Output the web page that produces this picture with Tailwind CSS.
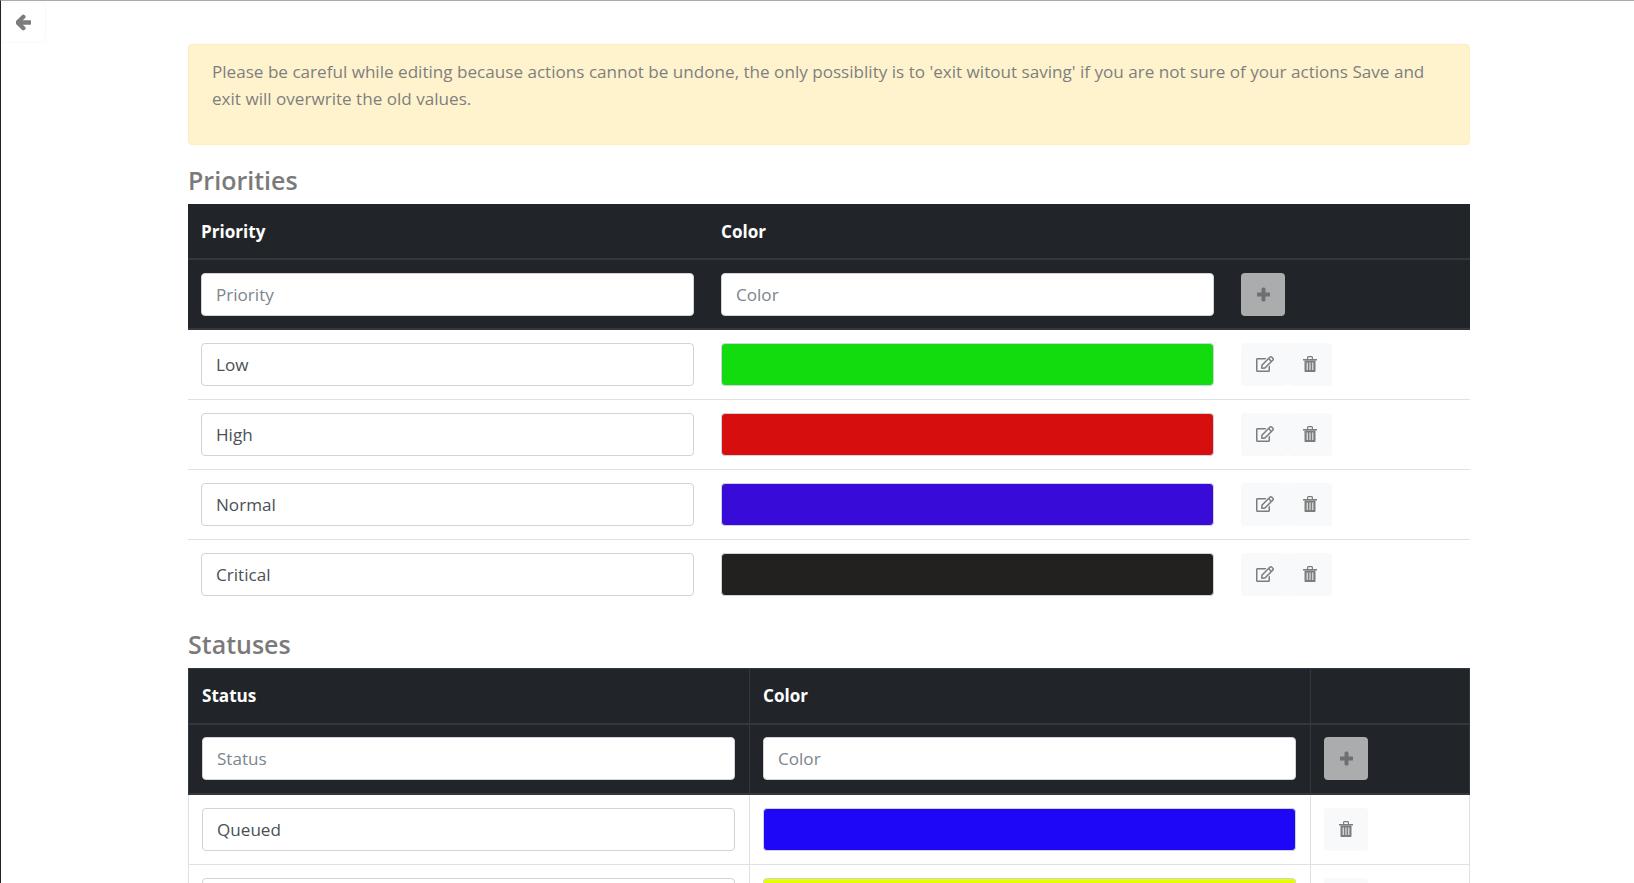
<!DOCTYPE html>
<html lang="en">
<head>
<meta charset="utf-8">
<script src="https://cdn.jsdelivr.net/npm/@tailwindcss/browser@4"></script>
<title>Priorities and statuses</title>
</head>
<body class="h-[883px] overflow-hidden bg-white font-['Open_Sans',sans-serif] text-[17.1px] text-[#7a7a7a]">
<div class="relative h-[883px] overflow-hidden border-t border-l border-t-[#aaaaaa] border-l-[#222222]">
  <button class="absolute left-0 top-[1px] flex h-[41px] w-[45px] items-center justify-center rounded-[4px] border border-[#f8f9fa] bg-white">
    <svg viewBox="0 0 448 512" class="h-[17px] w-[15px] fill-[#7d7d7d] stroke-[#7d7d7d] stroke-[50]"><path d="M257.5 445.1l-22.2 22.2c-9.4 9.4-24.6 9.4-33.9 0L7 273c-9.4-9.4-9.4-24.6 0-33.9L201.4 44.7c9.4-9.4 24.6-9.4 33.9 0l22.2 22.2c9.5 9.5 9.3 25-.4 34.3L136.6 216H424c13.3 0 24 10.7 24 24v32c0 13.3-10.7 24-24 24H136.6l120.5 114.8c9.8 9.3 10 24.8.4 34.3z"/></svg>
  </button>

  <main class="ml-[187px] w-[1282px] pt-[43px]">
    <div class="h-[101px] rounded-[4px] border border-[#ffeeba] bg-[#fff3cd] px-[23px] pt-[13px] leading-[27px] text-[#7f7f7f]">
      Please be careful while editing because actions cannot be undone, the only possiblity is to 'exit witout saving' if you are not sure of your actions Save and<br>exit will overwrite the old values.
    </div>

    <h2 class="mt-[19px] h-[40px] text-[25px] font-semibold leading-[32px] text-[#7a7a7a]">Priorities</h2>

    <table class="w-[1282px] table-fixed border-collapse">
      <colgroup><col class="w-[520px]"><col class="w-[520px]"><col></colgroup>
      <thead class="bg-[#212529] text-white">
        <tr class="h-[55px] border-b-2 border-[#32383e]">
          <th class="px-[13px] pt-[2px] text-left font-bold">Priority</th>
          <th class="px-[13px] pt-[2px] text-left font-bold">Color</th>
          <th></th>
        </tr>
        <tr class="h-[70px] border-b-2 border-[#32383e]">
          <td class="px-[13px] font-normal"><input placeholder="Priority" class="h-[43px] w-[493px] rounded-[4px] border border-[#ced4da] bg-white px-[14px] text-[#495057] placeholder:text-[#7d858c]"></td>
          <td class="px-[13px] font-normal"><input placeholder="Color" class="h-[43px] w-[493px] rounded-[4px] border border-[#ced4da] bg-white px-[14px] text-[#495057] placeholder:text-[#7d858c]"></td>
          <td class="px-[13px]">
            <button class="flex h-[43px] w-[44px] items-center justify-center rounded-[4px] bg-[#abacad]"><svg viewBox="0 0 448 512" class="h-[15px] w-[13px] fill-[#6c7072] stroke-[#6c7072] stroke-[40]"><path d="M416 208H272V64c0-17.67-14.33-32-32-32h-32c-17.67 0-32 14.33-32 32v144H32c-17.67 0-32 14.33-32 32v32c0 17.67 14.33 32 32 32h144v144c0 17.67 14.33 32 32 32h32c17.67 0 32-14.33 32-32V304h144c17.67 0 32-14.33 32-32v-32c0-17.67-14.33-32-32-32z"/></svg></button>
          </td>
        </tr>
      </thead>
      <tbody>
        <tr class="h-[70px] border-b border-[#dee2e6]">
          <td class="px-[13px]"><input value="Low" class="h-[43px] w-[493px] rounded-[4px] border border-[#ced4da] bg-white px-[14px] text-[#495057]"></td>
          <td class="px-[13px]"><div class="h-[43px] w-[493px] rounded-[4px] border border-[#ced4da] bg-[#12dc0e]"></div></td>
          <td class="px-[13px]"><div class="flex">
            <button class="flex h-[43px] w-[47px] items-center justify-center rounded-[4px] bg-[#f8f9fa]"><svg viewBox="0 0 576 512" class="h-[16px] w-[18px] fill-[#7d7d7d]"><path d="M402.3 344.9l32-32c5-5 13.7-1.5 13.7 5.7V464c0 26.5-21.5 48-48 48H48c-26.5 0-48-21.5-48-48V112c0-26.5 21.5-48 48-48h273.5c7.1 0 10.7 8.6 5.7 13.7l-32 32c-1.5 1.5-3.5 2.3-5.7 2.3H48v352h352V350.5c0-2.1.8-4.1 2.3-5.6zm156.6-201.8L296.3 405.7l-90.4 10c-26.2 2.9-48.5-19.2-45.6-45.6l10-90.4L432.9 17.1c22.9-22.9 59.9-22.9 82.7 0l43.2 43.2c22.9 22.9 22.9 60 .1 82.8zM460.1 174L402 115.9 216.2 301.8l-7.3 65.3 65.3-7.3L460.1 174zm64.8-79.7l-43.2-43.2c-4.1-4.1-10.8-4.1-14.8 0L436 82l58.1 58.1 30.9-30.9c4-4.2 4-10.8-.1-14.9z"/></svg></button>
            <button class="flex h-[43px] w-[44px] items-center justify-center rounded-[4px] bg-[#f8f9fa]"><svg viewBox="0 0 14 16" class="h-[16px] w-[14px] fill-[#7d7d7d]"><path d="M0 3h14v1.5H0zM4 3V1.5C4 .7 4.7 0 5.5 0h3c.8 0 1.5.7 1.5 1.5V3H8.8V1.2H5.2V3z"/><path fill-rule="evenodd" d="M1.5 4.5h11V15c0 .6-.4 1-1 1h-9c-.6 0-1-.4-1-1zM3.7 6.5v7.5h1V6.5zM6.5 6.5v7.5h1V6.5zM9.3 6.5v7.5h1V6.5z"/></svg></button>
          </div></td>
        </tr>
        <tr class="h-[70px] border-b border-[#dee2e6]">
          <td class="px-[13px]"><input value="High" class="h-[43px] w-[493px] rounded-[4px] border border-[#ced4da] bg-white px-[14px] text-[#495057]"></td>
          <td class="px-[13px]"><div class="h-[43px] w-[493px] rounded-[4px] border border-[#ced4da] bg-[#d70e0e]"></div></td>
          <td class="px-[13px]"><div class="flex">
            <button class="flex h-[43px] w-[47px] items-center justify-center rounded-[4px] bg-[#f8f9fa]"><svg viewBox="0 0 576 512" class="h-[16px] w-[18px] fill-[#7d7d7d]"><path d="M402.3 344.9l32-32c5-5 13.7-1.5 13.7 5.7V464c0 26.5-21.5 48-48 48H48c-26.5 0-48-21.5-48-48V112c0-26.5 21.5-48 48-48h273.5c7.1 0 10.7 8.6 5.7 13.7l-32 32c-1.5 1.5-3.5 2.3-5.7 2.3H48v352h352V350.5c0-2.1.8-4.1 2.3-5.6zm156.6-201.8L296.3 405.7l-90.4 10c-26.2 2.9-48.5-19.2-45.6-45.6l10-90.4L432.9 17.1c22.9-22.9 59.9-22.9 82.7 0l43.2 43.2c22.9 22.9 22.9 60 .1 82.8zM460.1 174L402 115.9 216.2 301.8l-7.3 65.3 65.3-7.3L460.1 174zm64.8-79.7l-43.2-43.2c-4.1-4.1-10.8-4.1-14.8 0L436 82l58.1 58.1 30.9-30.9c4-4.2 4-10.8-.1-14.9z"/></svg></button>
            <button class="flex h-[43px] w-[44px] items-center justify-center rounded-[4px] bg-[#f8f9fa]"><svg viewBox="0 0 14 16" class="h-[16px] w-[14px] fill-[#7d7d7d]"><path d="M0 3h14v1.5H0zM4 3V1.5C4 .7 4.7 0 5.5 0h3c.8 0 1.5.7 1.5 1.5V3H8.8V1.2H5.2V3z"/><path fill-rule="evenodd" d="M1.5 4.5h11V15c0 .6-.4 1-1 1h-9c-.6 0-1-.4-1-1zM3.7 6.5v7.5h1V6.5zM6.5 6.5v7.5h1V6.5zM9.3 6.5v7.5h1V6.5z"/></svg></button>
          </div></td>
        </tr>
        <tr class="h-[70px] border-b border-[#dee2e6]">
          <td class="px-[13px]"><input value="Normal" class="h-[43px] w-[493px] rounded-[4px] border border-[#ced4da] bg-white px-[14px] text-[#495057]"></td>
          <td class="px-[13px]"><div class="h-[43px] w-[493px] rounded-[4px] border border-[#ced4da] bg-[#380bd8]"></div></td>
          <td class="px-[13px]"><div class="flex">
            <button class="flex h-[43px] w-[47px] items-center justify-center rounded-[4px] bg-[#f8f9fa]"><svg viewBox="0 0 576 512" class="h-[16px] w-[18px] fill-[#7d7d7d]"><path d="M402.3 344.9l32-32c5-5 13.7-1.5 13.7 5.7V464c0 26.5-21.5 48-48 48H48c-26.5 0-48-21.5-48-48V112c0-26.5 21.5-48 48-48h273.5c7.1 0 10.7 8.6 5.7 13.7l-32 32c-1.5 1.5-3.5 2.3-5.7 2.3H48v352h352V350.5c0-2.1.8-4.1 2.3-5.6zm156.6-201.8L296.3 405.7l-90.4 10c-26.2 2.9-48.5-19.2-45.6-45.6l10-90.4L432.9 17.1c22.9-22.9 59.9-22.9 82.7 0l43.2 43.2c22.9 22.9 22.9 60 .1 82.8zM460.1 174L402 115.9 216.2 301.8l-7.3 65.3 65.3-7.3L460.1 174zm64.8-79.7l-43.2-43.2c-4.1-4.1-10.8-4.1-14.8 0L436 82l58.1 58.1 30.9-30.9c4-4.2 4-10.8-.1-14.9z"/></svg></button>
            <button class="flex h-[43px] w-[44px] items-center justify-center rounded-[4px] bg-[#f8f9fa]"><svg viewBox="0 0 14 16" class="h-[16px] w-[14px] fill-[#7d7d7d]"><path d="M0 3h14v1.5H0zM4 3V1.5C4 .7 4.7 0 5.5 0h3c.8 0 1.5.7 1.5 1.5V3H8.8V1.2H5.2V3z"/><path fill-rule="evenodd" d="M1.5 4.5h11V15c0 .6-.4 1-1 1h-9c-.6 0-1-.4-1-1zM3.7 6.5v7.5h1V6.5zM6.5 6.5v7.5h1V6.5zM9.3 6.5v7.5h1V6.5z"/></svg></button>
          </div></td>
        </tr>
        <tr class="h-[70px]">
          <td class="px-[13px]"><input value="Critical" class="h-[43px] w-[493px] rounded-[4px] border border-[#ced4da] bg-white px-[14px] text-[#495057]"></td>
          <td class="px-[13px]"><div class="h-[43px] w-[493px] rounded-[4px] border border-[#ced4da] bg-[#22211f]"></div></td>
          <td class="px-[13px]"><div class="flex">
            <button class="flex h-[43px] w-[47px] items-center justify-center rounded-[4px] bg-[#f8f9fa]"><svg viewBox="0 0 576 512" class="h-[16px] w-[18px] fill-[#7d7d7d]"><path d="M402.3 344.9l32-32c5-5 13.7-1.5 13.7 5.7V464c0 26.5-21.5 48-48 48H48c-26.5 0-48-21.5-48-48V112c0-26.5 21.5-48 48-48h273.5c7.1 0 10.7 8.6 5.7 13.7l-32 32c-1.5 1.5-3.5 2.3-5.7 2.3H48v352h352V350.5c0-2.1.8-4.1 2.3-5.6zm156.6-201.8L296.3 405.7l-90.4 10c-26.2 2.9-48.5-19.2-45.6-45.6l10-90.4L432.9 17.1c22.9-22.9 59.9-22.9 82.7 0l43.2 43.2c22.9 22.9 22.9 60 .1 82.8zM460.1 174L402 115.9 216.2 301.8l-7.3 65.3 65.3-7.3L460.1 174zm64.8-79.7l-43.2-43.2c-4.1-4.1-10.8-4.1-14.8 0L436 82l58.1 58.1 30.9-30.9c4-4.2 4-10.8-.1-14.9z"/></svg></button>
            <button class="flex h-[43px] w-[44px] items-center justify-center rounded-[4px] bg-[#f8f9fa]"><svg viewBox="0 0 14 16" class="h-[16px] w-[14px] fill-[#7d7d7d]"><path d="M0 3h14v1.5H0zM4 3V1.5C4 .7 4.7 0 5.5 0h3c.8 0 1.5.7 1.5 1.5V3H8.8V1.2H5.2V3z"/><path fill-rule="evenodd" d="M1.5 4.5h11V15c0 .6-.4 1-1 1h-9c-.6 0-1-.4-1-1zM3.7 6.5v7.5h1V6.5zM6.5 6.5v7.5h1V6.5zM9.3 6.5v7.5h1V6.5z"/></svg></button>
          </div></td>
        </tr>
      </tbody>
    </table>

    <h2 class="mt-[19px] h-[40px] text-[25px] font-semibold leading-[32px] text-[#7a7a7a]">Statuses</h2>

    <table class="w-[1282px] table-fixed border-collapse">
      <colgroup><col class="w-[561px]"><col class="w-[561px]"><col></colgroup>
      <thead class="bg-[#212529] text-white">
        <tr class="h-[55px] border-b-2 border-[#32383e]">
          <th class="border border-[#32383e] px-[13px] pt-[1px] text-left font-bold">Status</th>
          <th class="border border-[#32383e] px-[13px] pt-[1px] text-left font-bold">Color</th>
          <th class="border border-[#32383e]"></th>
        </tr>
        <tr class="h-[70px] border-b-2 border-[#32383e]">
          <td class="border border-[#32383e] px-[13px] font-normal"><input placeholder="Status" class="h-[43px] w-[533px] rounded-[4px] border border-[#ced4da] bg-white px-[14px] text-[#495057] placeholder:text-[#7d858c]"></td>
          <td class="border border-[#32383e] px-[13px] font-normal"><input placeholder="Color" class="h-[43px] w-[533px] rounded-[4px] border border-[#ced4da] bg-white px-[14px] text-[#495057] placeholder:text-[#7d858c]"></td>
          <td class="border border-[#32383e] px-[13px]">
            <button class="flex h-[43px] w-[44px] items-center justify-center rounded-[4px] bg-[#abacad]"><svg viewBox="0 0 448 512" class="h-[15px] w-[13px] fill-[#6c7072] stroke-[#6c7072] stroke-[40]"><path d="M416 208H272V64c0-17.67-14.33-32-32-32h-32c-17.67 0-32 14.33-32 32v144H32c-17.67 0-32 14.33-32 32v32c0 17.67 14.33 32 32 32h144v144c0 17.67 14.33 32 32 32h32c17.67 0 32-14.33 32-32V304h144c17.67 0 32-14.33 32-32v-32c0-17.67-14.33-32-32-32z"/></svg></button>
          </td>
        </tr>
      </thead>
      <tbody>
        <tr class="h-[71px]">
          <td class="border border-[#dee2e6] px-[13px]"><input value="Queued" class="h-[43px] w-[533px] rounded-[4px] border border-[#ced4da] bg-white px-[14px] text-[#495057]"></td>
          <td class="border border-[#dee2e6] px-[13px]"><div class="h-[43px] w-[533px] rounded-[4px] border border-[#ced4da] bg-[#1e06f6]"></div></td>
          <td class="border border-[#dee2e6] px-[13px]">
            <button class="flex h-[43px] w-[44px] items-center justify-center rounded-[4px] bg-[#f8f9fa]"><svg viewBox="0 0 14 16" class="h-[16px] w-[14px] fill-[#7d7d7d]"><path d="M0 3h14v1.5H0zM4 3V1.5C4 .7 4.7 0 5.5 0h3c.8 0 1.5.7 1.5 1.5V3H8.8V1.2H5.2V3z"/><path fill-rule="evenodd" d="M1.5 4.5h11V15c0 .6-.4 1-1 1h-9c-.6 0-1-.4-1-1zM3.7 6.5v7.5h1V6.5zM6.5 6.5v7.5h1V6.5zM9.3 6.5v7.5h1V6.5z"/></svg></button>
          </td>
        </tr>
        <tr class="h-[70px]">
          <td class="border border-[#dee2e6] px-[13px]"><input class="h-[43px] w-[533px] rounded-[4px] border border-[#ced4da] bg-white px-[14px] text-[#495057]"></td>
          <td class="border border-[#dee2e6] px-[13px]"><div class="h-[43px] w-[533px] rounded-[4px] border border-[#ced4da] bg-[#e6ff00]"></div></td>
          <td class="border border-[#dee2e6] px-[13px]">
            <button class="flex h-[43px] w-[44px] items-center justify-center rounded-[4px] bg-[#f8f9fa]"></button>
          </td>
        </tr>
      </tbody>
    </table>
  </main>
</div>
</body>
</html>
